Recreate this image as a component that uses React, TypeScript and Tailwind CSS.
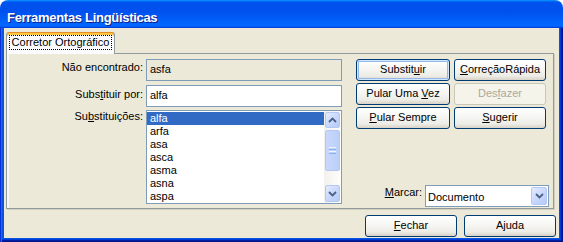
import React from 'react';

const U = ({ children }: { children: React.ReactNode }) => (
  <span className="underline underline-offset-[1px]">{children}</span>
);

interface BtnProps {
  children: React.ReactNode;
  isDefault?: boolean;
  disabled?: boolean;
  className?: string;
}

const XpButton = ({ children, isDefault, disabled, className = '' }: BtnProps) => (
  <div
    className={`h-[22px] flex items-center justify-center pb-[1px] rounded-[3px] border ${
      disabled
        ? 'border-[#C9C7BA] bg-[#F5F4EA] text-[#ACA899]'
        : 'border-[#003C74] bg-[linear-gradient(180deg,#FFFFFF_0%,#F7F7F4_40%,#EDECE6_80%,#D8D2C6_100%)] text-black'
    } ${isDefault ? 'shadow-[inset_0_0_0_1px_#CEE7FF,inset_0_0_0_2px_#98B8EA]' : ''} ${className}`}
  >
    {children}
  </div>
);

const Chevron = ({ up }: { up?: boolean }) => (
  <svg width="9" height="6" viewBox="0 0 9 6">
    <path
      d={up ? 'M1 5 L4.5 1.5 L8 5' : 'M1 1 L4.5 4.5 L8 1'}
      stroke="#4D6185"
      strokeWidth="1.8"
      fill="none"
    />
  </svg>
);

const ArrowBox = ({ up, className = '' }: { up?: boolean; className?: string }) => (
  <div
    className={`flex items-center justify-center rounded-[2px] border border-[#B5C8F3] bg-[linear-gradient(135deg,#E4ECFE_0%,#C7D6FC_55%,#B7CBF8_100%)] ${className}`}
  >
    <Chevron up={up} />
  </div>
);

const suggestions = ['alfa', 'arfa', 'asa', 'asca', 'asma', 'asna', 'aspa'];

export default function App() {
  return (
    <div className="w-[563px] h-[242px] bg-white font-['Liberation_Sans',Arial,sans-serif] text-[11px] leading-[13px] text-black">
      <div className="w-full h-full flex flex-col rounded-t-[8px] overflow-hidden">
        {/* title bar */}
        <div className="h-[28px] shrink-0 px-[7px] pt-[10px] bg-[linear-gradient(180deg,#0997FF,#0053EE_8%,#0050EE_40%,#0066FF_88%,#0066FF_93%,#005BFF_95%,#003DD7_96%,#003DD7)]">
          <span className="block font-bold text-[13px] leading-[15px] text-white tracking-[-0.3px] [text-shadow:1px_1px_0_#0F1F8A]">
            Ferramentas Lingüísticas
          </span>
        </div>

        <div className="flex-1 flex px-[4px] pb-[4px] bg-[#0855DD] shadow-[inset_1px_0_0_#0831D9,inset_2px_0_0_#166AEE,inset_-1px_-1px_0_#00138C,inset_-2px_-2px_0_#001EA0,inset_-3px_-3px_0_#003BDA]">
          <div className="flex-1 flex flex-col bg-[#ECE9D8]">
            {/* tab */}
            <div className="flex pt-[4px] pl-[2px]">
              <div className="relative z-10 -mb-px w-[109px] h-[22px] rounded-t-[3px] border-x border-[#919B9C] bg-[#FCFCFE] shadow-[inset_0_1px_0_#E68B2C,inset_0_3px_0_#FFC73C] pt-[3px] pl-[2px]">
                <div className="w-[103px] h-[15px] border border-dotted border-black flex items-center justify-center">
                  Corretor Ortográfico
                </div>
              </div>
            </div>

            {/* panel */}
            <div className="ml-[2px] mr-[5px] h-[156px] border border-[#919B9C] shadow-[inset_2px_0_0_#F8F7F2,1px_1px_0_#D3D0C2] pt-[5px] flex">
              <div className="flex flex-col w-[335px]">
                <div className="flex h-[22px]">
                  <div className="w-[136px] text-right pt-[2px]">Não encontrado:</div>
                  <div className="ml-[3px] w-[196px] border border-[#7F9DB9] bg-[#ECE9D8] pl-[3px] pt-[3px]">asfa</div>
                </div>
                <div className="flex h-[22px] mt-[4px]">
                  <div className="w-[136px] text-right pt-[3px]">
                    Subs<U>t</U>ituir por:
                  </div>
                  <div className="ml-[3px] w-[196px] border border-[#7F9DB9] bg-white pl-[3px] pt-[3px]">alfa</div>
                </div>
                <div className="flex mt-[3px]">
                  <div className="w-[136px] text-right">
                    Su<U>b</U>stituições:
                  </div>
                  <div className="ml-[3px] w-[196px] h-[94px] border border-[#7F9DB9] bg-white flex">
                    <div className="flex-1 pt-[1px]">
                      {suggestions.map((w, i) => (
                        <div
                          key={w}
                          className={`h-[13px] pl-[3px] ${i === 0 ? 'bg-[#316AC5] text-white' : ''}`}
                        >
                          {w}
                        </div>
                      ))}
                    </div>
                    <div className="w-[17px] p-[1px] flex flex-col bg-[linear-gradient(90deg,#F3F1EC,#FEFEFB)]">
                      <ArrowBox up className="h-[16px]" />
                      <div className="mt-[2px] h-[41px] rounded-[2px] border border-[#B5C8F3] bg-[linear-gradient(90deg,#C9D8FC,#BCCFFA)] flex flex-col items-center justify-center gap-[1px]">
                        <div className="w-[7px] h-px bg-[#EEF4FE]" />
                        <div className="w-[7px] h-px bg-[#8CB0F8]" />
                        <div className="w-[7px] h-px bg-[#EEF4FE]" />
                        <div className="w-[7px] h-px bg-[#8CB0F8]" />
                      </div>
                      <div className="flex-1" />
                      <ArrowBox className="h-[17px]" />
                    </div>
                  </div>
                </div>
              </div>

              <div className="ml-[14px] w-[193px] flex flex-col">
                <div className="grid grid-cols-[94px_92px] gap-x-[4px] gap-y-[2px]">
                  <XpButton isDefault>
                    <span>
                      Substit<U>u</U>ir
                    </span>
                  </XpButton>
                  <XpButton>
                    <span>
                      <U>C</U>orreçãoRápida
                    </span>
                  </XpButton>
                  <XpButton>
                    <span>
                      Pular Uma <U>V</U>ez
                    </span>
                  </XpButton>
                  <XpButton disabled>
                    <span>
                      Des<U>f</U>azer
                    </span>
                  </XpButton>
                  <XpButton>
                    <span>
                      <U>P</U>ular Sempre
                    </span>
                  </XpButton>
                  <XpButton>
                    <span>
                      <U>S</U>ugerir
                    </span>
                  </XpButton>
                </div>
                <div className="mt-auto mb-[1px] flex justify-end items-start gap-[3px]">
                  <div className="pt-[1px]">
                    <U>M</U>arcar:
                  </div>
                  <div className="w-[124px] h-[22px] border border-[#7F9DB9] bg-white flex p-[1px]">
                    <div className="flex-1 pl-[1px] pt-[4px]">Documento</div>
                    <ArrowBox className="w-[16px]" />
                  </div>
                </div>
              </div>
            </div>

            {/* footer buttons */}
            <div className="flex justify-end gap-[7px] pr-[3px] pt-[6px]">
              <XpButton className="w-[92px]">
                <span>
                  <U>F</U>echar
                </span>
              </XpButton>
              <XpButton className="w-[92px]">
                <span>
                  A<U>j</U>uda
                </span>
              </XpButton>
            </div>
          </div>
        </div>
      </div>
    </div>
  );
}
